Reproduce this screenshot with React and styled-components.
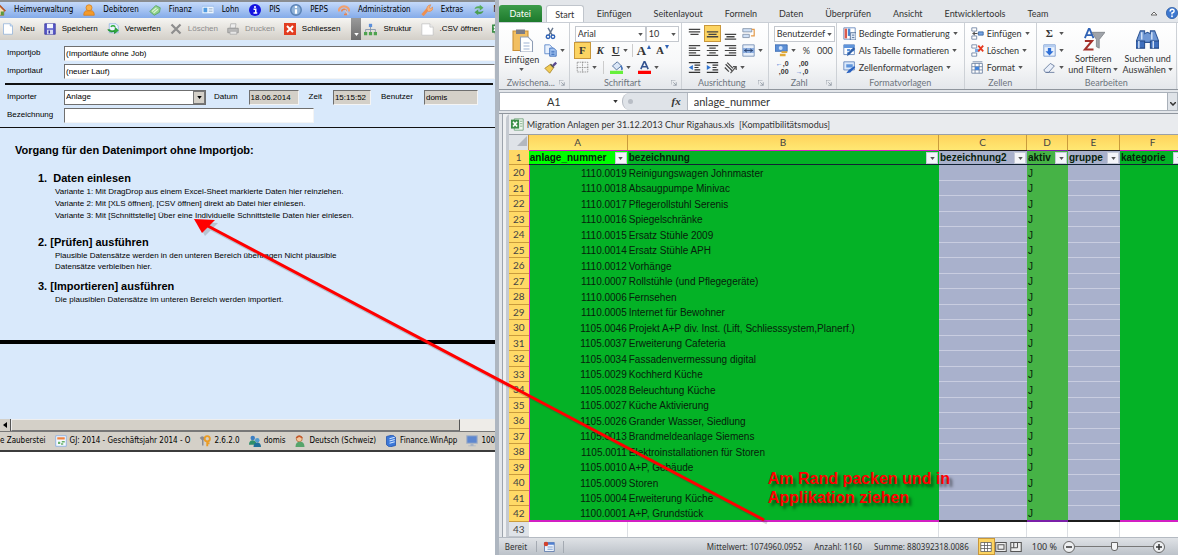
import React from "react";
import styled, {createGlobalStyle} from "styled-components";

const rows = [
  [20, "1110.0019", "Reinigungswagen Johnmaster"],
  [21, "1110.0018", "Absaugpumpe Minivac"],
  [22, "1110.0017", "Pflegerollstuhl Serenis"],
  [23, "1110.0016", "Spiegelschränke"],
  [24, "1110.0015", "Ersatz Stühle 2009"],
  [25, "1110.0014", "Ersatz Stühle APH"],
  [26, "1110.0012", "Vorhänge"],
  [27, "1110.0007", "Rollstühle (und Pflegegeräte)"],
  [28, "1110.0006", "Fernsehen"],
  [29, "1110.0005", "Internet für Bewohner"],
  [30, "1105.0046", "Projekt A+P div. Inst. (Lift, Schliesssystem,Planerf.)"],
  [31, "1105.0037", "Erweiterung Cafeteria"],
  [32, "1105.0034", "Fassadenvermessung digital"],
  [33, "1105.0029", "Kochherd Küche"],
  [34, "1105.0028", "Beleuchtung Küche"],
  [35, "1105.0027", "Küche Aktivierung"],
  [36, "1105.0026", "Grander Wasser, Siedlung"],
  [37, "1105.0013", "Brandmeldeanlage Siemens"],
  [38, "1105.0011", "Elektroinstallationen für Storen"],
  [39, "1105.0010", "A+P, Gebäude"],
  [40, "1105.0009", "Storen"],
  [41, "1105.0004", "Erweiterung Küche"],
  [42, "1100.0001", "A+P, Grundstück"],
];

const glyphs = {
  home: <><path d="M1 9L8 2l7 7-2 1v5H3v-5z" fill="#f3dfb8" stroke="#a0692c"/><path d="M0 9L8 1l8 8-2 1-6-6-6 6z" fill="#b5532a"/><path d="M9 10h4v5H9z" fill="#5a9a3c"/></>,
  person: <><path d="M1 15q0-6 4-6h6q4 0 4 6z" fill="#f39a2c" stroke="#d97a10"/><circle cx="8" cy="5" r="4" fill="#f8b04a" stroke="#d97a10"/></>,
  money: <><path d="M1 10L9 2l6 3-1 6-7 4z" fill="#8fd08a" stroke="#4fa05a"/><path d="M4 10l6-5M6 12l6-5" stroke="#d9f5d2" strokeWidth="1.5"/></>,
  card: <><path d="M0 3h16v10H0z" fill="#eef6ff" stroke="#8db4e6"/><path d="M2 5h5v6H2z" fill="#4f9be0"/><path d="M9 6h5M9 8h5M9 10h5" stroke="#9db4cc"/></>,
  info: <><circle cx="8" cy="8" r="8" fill="#1414e0"/><path d="M6 7h3v5h2M6 12h5" stroke="#fff" strokeWidth="2" fill="none"/><circle cx="8" cy="4" r="1.4" fill="#fff"/></>,
  info2: <><circle cx="8" cy="8" r="7" fill="#8fb2d8" stroke="#5b83b5" strokeWidth="2"/><path d="M8 7v6" stroke="#fff" strokeWidth="3"/><circle cx="8" cy="4" r="1.7" fill="#fff"/></>,
  admin: <><path d="M1 10a7 7 0 0 1 14 0" fill="none" stroke="#f0a070" strokeWidth="3"/><path d="M5 10a3 3 0 0 1 6 0v4H8" fill="none" stroke="#e88450" strokeWidth="2"/><path d="M9 8l5 6" stroke="#c9c9d6" strokeWidth="2"/></>,
  wrench: <><path d="M2 15l7-8" stroke="#ee8f50" strokeWidth="4"/><path d="M8 8q-1-6 5-7l-2 4 2 1 3-2q0 6-6 6z" fill="#f7b47e" stroke="#e08c52"/></>,
  refresh: <><path d="M2 7q1-5 7-4V1l5 4-5 4V6Q5 5 2 7z" fill="#56ad5a"/><path d="M14 9q-1 5-7 4v2l-5-4 5-4v3q4 1 7-1z" fill="#4a9e50"/></>,
  page: <><path d="M2 1h9l3 3v11H2z" fill="#fff" stroke="#8fb0da"/><path d="M11 1v3h3" fill="#dbe9fa" stroke="#8fb0da"/></>,
  greyPage: <><path d="M1 1h10l4 4v10H1z" fill="#fff" stroke="#c4c4c4"/><path d="M11 1v4h4" fill="#eee" stroke="#c4c4c4"/></>,
  save: <><path d="M1 1h14v14H1z" fill="#5a5ac8" stroke="#33339b"/><path d="M4 1h8v6H4z" fill="#f2f4ff"/><path d="M4 9h8v6H4z" fill="#d5d9f2"/><path d="M6 10h2v4H6z" fill="#33339b"/></>,
  undo: <><path d="M3 1h9l3 3v9H3z" fill="#eef5ff" stroke="#88aee0"/><path d="M1 9q4 5 9 2v3l5-4-4-4v3q-5 3-7 0z" fill="#2fae3c" stroke="#168a28"/><path d="M5 5q3-3 6 0" fill="none" stroke="#2fae3c" strokeWidth="2"/></>,
  cross: <path d="M2 2l12 12M14 2L2 14" stroke="#8e8e8e" strokeWidth="3"/>,
  print: <><path d="M5 1h7l-1 6H4z" fill="#ededed" stroke="#aaa"/><path d="M1 7h14v6H1z" fill="#b9b9b9" stroke="#8f8f8f"/><path d="M4 11h9v4H4z" fill="#e5e5e5" stroke="#aaa"/></>,
  close: <><path d="M0 0h16v16H0z" fill="#e23d20"/><path d="M4 4l8 8M12 4l-8 8" stroke="#fff" strokeWidth="2.6"/></>,
  tree: <><path d="M8 4v4M2 11V8h12v3M8 8v3" stroke="#7d8fa5" fill="none"/><path d="M6 1h4v4H6z" fill="#5b8fdb"/><path d="M0 11h4v4H0zM6 11h4v4H6zM12 11h4v4h-4z" fill="#4ea24e"/></>,
  excel: <><path d="M4 1h11v14H4z" fill="#eff7ef" stroke="#6d9f78"/><path d="M11 4h3M11 7h3M11 10h3" stroke="#72a67c"/><path d="M0 2h10v11H0z" fill="#3c8f49"/><path d="M2.500 4.500l5 6M7.500 4.500l-5 6" stroke="#fff" strokeWidth="2"/></>,
  calendar: <><path d="M1 1h14v14H1z" fill="#f5faff" stroke="#7ba7e0"/><path d="M3 3h10v3H3z" fill="#ee8340"/><path d="M4 9h3v3H4zM9 8h4v2H9zM8 11h3v2H8z" fill="#69b269"/></>,
  keys: <><path d="M1 4q3-5 7 0l-2 3v7H4V7z" fill="#8b8b93"/><circle cx="11" cy="5" r="3.500" fill="none" stroke="#eb9c25" strokeWidth="2.500"/><path d="M11 8v7M11 11h3" stroke="#eb9c25" strokeWidth="2.500"/></>,
  users: <><circle cx="5" cy="4" r="3" fill="#3d7fc2"/><path d="M0 13q0-6 5-6t5 6z" fill="#2f8f6a"/><circle cx="11" cy="7" r="3" fill="#4f9bd0"/><path d="M6 16q0-6 5-6t5 6z" fill="#1f6f99"/></>,
  globeUser: <><circle cx="7" cy="5" r="4" fill="#f3c79d" stroke="#b06a33"/><path d="M2 16q0-7 6-7t6 7z" fill="#56a46b"/><path d="M3 4q4-5 8 0" stroke="#c4582c" strokeWidth="2" fill="none"/></>,
  server: <><path d="M2 2l8-2 4 3v11l-8 2-4-3z" fill="#3c78d8" stroke="#1f4fa8"/><path d="M6 5l7-2M6 8l7-2M6 11l7-2" stroke="#cfe4ff" strokeWidth="1.500"/></>,
  monitor: <><path d="M1 1h14v10H1z" fill="#5e87cf" stroke="#a9b4c4" strokeWidth="1.500"/><path d="M6 11h4v3H6zM3 14h10v1H3z" fill="#a9b4c4"/></>,
  clipboard: <><path d="M2 2h10v13H2z" fill="#f2bf62" stroke="#c98f35" strokeWidth=".7"/><path d="M4 1h6v3H4z" fill="#7d7d86"/><path d="M7 6h5l3 3v7H7z" fill="#fff" stroke="#8e9db5" strokeWidth=".7"/><path d="M9 10h4M9 12h4M9 14h4" stroke="#9fb4d4" strokeWidth=".7"/></>,
  scissors: <><path d="M5 1l5 9M11 1L6 10" stroke="#64748c" strokeWidth="1.700"/><circle cx="5" cy="12" r="2.200" fill="none" stroke="#2f62b5" strokeWidth="1.700"/><circle cx="11" cy="12" r="2.200" fill="none" stroke="#2f62b5" strokeWidth="1.700"/></>,
  copy: <><path d="M1 1h6l3 3v8H1z" fill="#e7f0fd" stroke="#4f7fc6"/><path d="M7 5h5l3 3v7H7z" fill="#a6c6f2" stroke="#2f62b5"/><path d="M9 9h4M9 11h4M9 13h4" stroke="#2f62b5"/></>,
  brush: <><path d="M10 5l4-4 2 2-4 4z" fill="#5a4a90"/><path d="M1 9l7-5 4 4-5 7z" fill="#f2cc55" stroke="#a8842a"/><path d="M8 4l4 4" stroke="#555" strokeWidth="2"/></>,
  borders: <path d="M1.500 1.500h13v12h-13zM8 1v13M1 8h14" fill="none" stroke="#8c8c8c" strokeDasharray="2 1"/>,
  fill: <><path d="M3 6l6-5 5 5-6 5z" fill="#dbe7f7" stroke="#41638f"/><path d="M13 6q3 3 1 5" stroke="#3f6fb8" strokeWidth="2" fill="none"/><path d="M0 12h16v4H0z" fill="#66f03a"/></>,
  fontColor: <><path d="M3.500 10L8 0l4.500 10M5 7h6" fill="none" stroke="#33528f" strokeWidth="2"/><path d="M0 12h16v4H0z" fill="#f00"/></>,
  top: <path d="M1 3h14M1 6h14M3 9h10" stroke="#444" strokeWidth="1.600"/>,
  middle: <path d="M1 6h14M3 9h10M1 12h14" stroke="#444" strokeWidth="1.600"/>,
  bottom: <path d="M1 9h14M3 12h10M1 15h14" stroke="#444" strokeWidth="1.600"/>,
  left: <path d="M1 2h14M1 5h9M1 8h14M1 11h9M1 14h14" stroke="#444" strokeWidth="1.500"/>,
  center: <path d="M1 2h14M4 5h8M1 8h14M4 11h8M1 14h14" stroke="#444" strokeWidth="1.500"/>,
  right: <path d="M1 2h14M6 5h9M1 8h14M6 11h9M1 14h14" stroke="#444" strokeWidth="1.500"/>,
  wrap: <><path d="M1 2h11v4H1zM1 9h8v4H1z" fill="#cfe0f6" stroke="#7f8fa5"/><path d="M12 3h3v8h-4" stroke="#e39a4a" fill="none" strokeWidth="1.500"/></>,
  merge: <><path d="M1 1h14v14H1z" fill="#e7effa" stroke="#6d88b0"/><path d="M1 5h14v6H1z" fill="#86a9dd"/><path d="M3 8h10M6 6L3 8l3 2M10 6l3 2-3 2" stroke="#243b66" fill="none"/></>,
  outdent: <><path d="M1 2h14M8 5h7M8 8h5M8 11h7M1 14h14" stroke="#333" strokeWidth="1.500"/><path d="M6 5L1 8l5 3z" fill="#2f74d0"/></>,
  indent: <><path d="M1 2h14M8 5h7M8 8h5M8 11h7M1 14h14" stroke="#333" strokeWidth="1.500"/><path d="M1 5l5 3-5 3z" fill="#2f74d0"/></>,
  rotate: <><path d="M2 4l8 8M4 2l7 7M1 8l5 5" stroke="#444" strokeWidth="1.500"/><path d="M8 15l7-8M15 11V7h-4" stroke="#555" fill="none" strokeWidth="1.500"/></>,
  currency: <><path d="M0 1h15v8H0z" fill="#5c8fd6" stroke="#3767ad"/><circle cx="7" cy="5" r="2.400" fill="#cfe2fa"/><path d="M8 9h7v2H8zM6 12h7v3H6z" fill="#e2aa38"/></>,
  conditional: <><path d="M1 1h14v14H1z" fill="#fff" stroke="#5a7fb8"/><path d="M2 2h3v12H2z" fill="#db5b4e"/><path d="M6 2h3v9H6z" fill="#4a86d4"/><path d="M9 7h7v9H9z" fill="#dfe9f7" stroke="#44638f"/><path d="M11 10h3M11 13h3" stroke="#44638f"/></>,
  tableFmt: <><path d="M1 1h13v12H1z" fill="#fff" stroke="#5a7fb8"/><path d="M1 1h13v4H1zM5 6h4v3H5zM10 6h4v3h-4zM5 10h4v3H5z" fill="#5f95dc"/><path d="M15 6l-7 7-3 2 1-4 7-7z" fill="#2f5fa8"/></>,
  cellFmt: <><path d="M1 1h13v10H1z" fill="#dceafb" stroke="#5a7fb8"/><path d="M4 4h8v4H4z" fill="#5f95dc"/><path d="M15 8l-6 6-5 1 3-4 7-5z" fill="#2a62c0"/></>,
  insert: <><path d="M1 1h6v4H1zM1 11h6v4H1z" fill="#fff" stroke="#667d9e"/><path d="M9 6h6v4H9z" fill="#77a5e2" stroke="#33609e"/><path d="M8 8H3M5 6L2 8l3 2" stroke="#222" fill="none"/></>,
  remove: <><path d="M1 1h6v4H1zM1 11h6v4H1z" fill="#fff" stroke="#667d9e"/><path d="M5 6h5v4H5z" fill="#77a5e2"/><path d="M9 2l6 7M15 2L9 9" stroke="#e6391f" strokeWidth="2.200"/></>,
  format: <><path d="M1 3h13v12H1z" fill="#fff" stroke="#667d9e"/><path d="M1 7h13M1 11h13M5 3v12M10 3v12M2 1h12" stroke="#667d9e"/><path d="M5 7h5v4H5z" fill="#3f82dc"/></>,
  fillDown: <><path d="M1 1h14v14H1z" fill="#eaf2fd" stroke="#6c90c8"/><path d="M1 1h14v3H1z" fill="#b5cdf0"/><path d="M6 5h4v4h3l-5 5-5-5h3z" fill="#2f6fd6"/></>,
  eraser: <><path d="M1 11L9 3l5 3-7 8H3z" fill="#e9effa" stroke="#5b7196"/><path d="M4 14h10" stroke="#5b7196"/></>,
  funnel: <><path d="M2 7L5 0l3 7M3 5h4" stroke="#2f62b5" fill="none" strokeWidth="1.300"/><path d="M2 9h5l-5 6h6" stroke="#a3302b" fill="none" strokeWidth="1.400"/><path d="M7 3h9l-4 5v6l-2-1V8z" fill="#a0a4aa" stroke="#74787e" strokeWidth=".5"/></>,
  binoculars: <><path d="M3 2h3v2l2-1 2 1V2h3l2 5 1 3H0l1-3z" fill="#6f97d4" stroke="#2c5494" strokeWidth=".7"/><path d="M0 9h6v5H0zM10 9h6v5h-6z" fill="#3f6fbd" stroke="#264a86" strokeWidth=".7"/><path d="M2 9v5M12 9v5M4 3v5M11 3v5" stroke="#d5e4f8"/></>,
  help: <><circle cx="8" cy="8" r="7.500" fill="#3d78d0" stroke="#2858a0"/><path d="M5.500 6q0-3 2.700-3t2.600 2.500Q10.800 7 8 8v2" stroke="#fff" strokeWidth="1.900" fill="none"/><circle cx="8" cy="12.300" r="1.200" fill="#fff"/></>,
  macro: <><path d="M2 2h13v12H2z" fill="#eef4fd" stroke="#4f6fa6"/><path d="M2 2h13v3H2z" fill="#4f7fd0"/><path d="M6 8h7M6 11h7" stroke="#7f9fd0" strokeWidth="1.500"/><circle cx="4" cy="4" r="3" fill="#d4412c"/></>,
  grid: <path d="M1 2h14v12H1zM1 6h14M1 10h14M6 2v12M10 2v12" fill="#fff" stroke="#555"/>,
  layout: <path d="M1 2h14v12H1zM4 5h8v6H4z" fill="#eee" stroke="#555" strokeWidth="1.400"/>,
  breaks: <path d="M1 2h14v12H1zM5 2v7M10 2v7M1 9h9" fill="#eee" stroke="#555" strokeWidth="1.400"/>,
};

const Icon = ({name, size = 12}) => (
  <Svg viewBox="0 0 16 16" width={size} height={size} aria-hidden="true">{glyphs[name]}</Svg>
);

const Caret = ({color = "#555"}) => (
  <Svg viewBox="0 0 6 4" width="5" height="3" aria-hidden="true"><path d="M0 0h6L3 4z" fill={color}/></Svg>
);

const menu = [
  ["home", "Heimverwaltung"], ["person", "Debitoren"], ["money", "Finanz"], ["card", "Lohn"],
  ["info", "PIS"], ["info2", "PEPS"], ["admin", "Administration"], ["wrench", "Extras"], ["refresh", "N"],
];
const tools = [
  ["page", "Neu"], ["save", "Speichern"], ["undo", "Verwerfen"], ["cross", "Löschen", true],
  ["print", "Drucken", true], ["close", "Schliessen"],
];
const tabs = ["Einfügen", "Seitenlayout", "Formeln", "Daten", "Überprüfen", "Ansicht", "Entwicklertools", "Team"];

const ImportWindow = () => (
  <Finance>
    <MenuBar>
      {menu.map(([icon, text]) => <MenuItem key={text}><Icon name={icon}/>{text}</MenuItem>)}
    </MenuBar>
    <ToolBar>
      {tools.map(([icon, text, off]) => (
        <Tool key={text} disabled={off}><Icon name={icon}/>{text}</Tool>
      ))}
      <Grip><Caret color="#fff"/></Grip>
      <Tool><Icon name="tree" size={13}/>Struktur</Tool>
      <Tool><Icon name="greyPage" size={13}/>.CSV öffnen</Tool>
      <Tool aria-label=".XLS öffnen"><Icon name="excel"/></Tool>
    </ToolBar>
    <Form>
      <FormRow>
        <label htmlFor="job">Importjob</label>
        <Field id="job" $wide defaultValue="(Importläufe ohne Job)"/>
      </FormRow>
      <FormRow>
        <label htmlFor="lauf">Importlauf</label>
        <Field id="lauf" $wide defaultValue="(neuer Lauf)"/>
      </FormRow>
      <Rule/>
      <FormRow>
        <label htmlFor="importer">Importer</label>
        <Combo>
          <select id="importer"><option>Anlage</option></select>
          <ComboArrow><Caret color="#000"/></ComboArrow>
        </Combo>
        <Inline htmlFor="datum">Datum</Inline>
        <Field id="datum" $width={50} readOnly value="18.06.2014"/>
        <Inline htmlFor="zeit">Zeit</Inline>
        <Field id="zeit" $width={38} readOnly value="15:15:52"/>
        <Inline htmlFor="benutzer">Benutzer</Inline>
        <Field id="benutzer" $width={54} readOnly value="domis"/>
      </FormRow>
      <FormRow>
        <label htmlFor="bez">Bezeichnung</label>
        <Field id="bez" $width={250} defaultValue=""/>
      </FormRow>
    </Form>
    <Guide>
      <h1>Vorgang für den Datenimport ohne Importjob:</h1>
      <Step>
        <h2>1.&nbsp; Daten einlesen</h2>
        <p>Variante 1: Mit DragDrop aus einem Excel-Sheet markierte Daten hier reinziehen.</p>
        <p>Variante 2: Mit [XLS öffnen], [CSV öffnen] direkt ab Datei hier einlesen.</p>
        <p>Variante 3: Mit [Schnittstelle] Über eine Individuelle Schnittstelle Daten hier einlesen.</p>
      </Step>
      <Step $tight>
        <h2>2. [Prüfen] ausführen</h2>
        <p>Plausible Datensätze werden in den unteren Bereich übertragen Nicht plausible</p>
        <p>Datensätze verbleiben hier.</p>
      </Step>
      <Step>
        <h2>3. [Importieren] ausführen</h2>
        <p>Die plausiblen Datensätze im unteren Bereich werden importiert.</p>
      </Step>
    </Guide>
    <ResultArea/>
    <ScrollBar>
      <ScrollButton aria-label="Nach links"><Svg viewBox="0 0 4 6" width="4" height="6"><path d="M4 0v6L0 3z"/></Svg></ScrollButton>
      <ScrollThumb/>
    </ScrollBar>
    <FinanceStatus>
      <StatusItem>e Zauberstei</StatusItem>
      <StatusItem><Icon name="calendar"/>GJ: 2014 - Geschäftsjahr 2014 - O</StatusItem>
      <StatusItem><Icon name="keys"/>2.6.2.0</StatusItem>
      <StatusItem><Icon name="users"/>domis</StatusItem>
      <StatusItem><Icon name="globeUser"/>Deutsch (Schweiz)</StatusItem>
      <StatusItem><Icon name="server"/>Finance.WinApp</StatusItem>
      <StatusItem><Icon name="monitor"/>100</StatusItem>
    </FinanceStatus>
  </Finance>
);

const Launcher = () => (
  <Svg viewBox="0 0 8 8" width="6" height="6"><path d="M0 6V0h6M3 3l4 4M7 3v4H3" fill="none" stroke="#8a929c"/></Svg>
);

const Group = ({title, width, launcher, children}) => (
  <GroupBox $width={width}>
    <GroupBody>{children}</GroupBody>
    <GroupTitle><span>{title}</span>{launcher && <Launcher/>}</GroupTitle>
  </GroupBox>
);

const Split = ({icon, children, label, caret = true, ...rest}) => (
  <RibbonButton aria-label={label} {...rest}>
    {icon && <Icon name={icon} size={13}/>}{children}{caret && <Caret/>}
  </RibbonButton>
);

const Ribbon = () => (
  <RibbonBox>
    <Group title="Zwischena..." width={71} launcher>
      <BigButton $width={36}><Icon name="clipboard" size={24}/><span>Einfügen</span><Caret/></BigButton>
      <Lines $gap={3}>
        <Line><Split icon="scissors" label="Ausschneiden" caret={false}/></Line>
        <Line><Split icon="copy" label="Kopieren"/></Line>
        <Line><Split icon="brush" label="Format übertragen" caret={false}/></Line>
      </Lines>
    </Group>
    <Group title="Schriftart" width={112} launcher>
      <Lines>
        <Line $tight>
          <Picker $width={71}><select aria-label="Schriftart"><option>Arial</option></select><Caret/></Picker>
          <Picker $width={33}><select aria-label="Schriftgrad"><option>10</option></select><Caret/></Picker>
        </Line>
        <Line $narrow>
          <Letter $on><b>F</b></Letter>
          <Letter><i>K</i></Letter>
          <Letter><u>U</u><Caret/></Letter>
          <Divider/>
          <Letter $big>A<Svg viewBox="0 0 4 4" width="4" height="4"><path d="M0 4h4L2 0z" fill="#2f62b5"/></Svg></Letter>
          <Letter>A<Svg viewBox="0 0 4 4" width="4" height="4"><path d="M0 0h4L2 4z" fill="#2f62b5"/></Svg></Letter>
        </Line>
        <Line>
          <Split icon="borders" label="Rahmen"/>
          <Divider/>
          <Split icon="fill" label="Füllfarbe"/>
          <Split icon="fontColor" label="Textfarbe"/>
        </Line>
      </Lines>
    </Group>
    <Group title="Ausrichtung" width={87} launcher>
      <Lines>
        <Line $narrow>
          <Split icon="top" label="Oben" caret={false}/>
          <Split icon="middle" label="Mitte" caret={false} $on/>
          <Split icon="bottom" label="Unten" caret={false}/>
          <Split icon="wrap" label="Zeilenumbruch" caret={false}/>
        </Line>
        <Line $narrow>
          <Split icon="left" label="Links" caret={false}/>
          <Split icon="center" label="Zentriert" caret={false}/>
          <Split icon="right" label="Rechts" caret={false}/>
          <Split icon="merge" label="Verbinden"/>
        </Line>
        <Line $narrow>
          <Split icon="outdent" label="Einzug verkleinern" caret={false}/>
          <Split icon="indent" label="Einzug vergrössern" caret={false}/>
          <Split icon="rotate" label="Orientierung"/>
        </Line>
      </Lines>
    </Group>
    <Group title="Zahl" width={68} launcher>
      <Lines>
        <Line $tight>
          <Picker $width={61}><select aria-label="Zahlenformat"><option>Benutzerdef</option></select><Caret/></Picker>
        </Line>
        <Line><Split icon="currency" label="Währung"/><Split caret={false}>%</Split><Split caret={false}>000</Split></Line>
        <Line>
          <Decimal aria-label="Dezimalstelle hinzufügen"><span><em>←</em>,0</span><span>,00</span></Decimal>
          <Decimal aria-label="Dezimalstelle löschen"><span>,00</span><span><em>→</em>,0</span></Decimal>
        </Line>
      </Lines>
    </Group>
    <Group title="Formatvorlagen" width={128}>
      <Lines>
        <Line><Split icon="conditional">Bedingte Formatierung</Split></Line>
        <Line><Split icon="tableFmt">Als Tabelle formatieren</Split></Line>
        <Line><Split icon="cellFmt">Zellenformatvorlagen</Split></Line>
      </Lines>
    </Group>
    <Group title="Zellen" width={72}>
      <Lines>
        <Line><Split icon="insert">Einfügen</Split></Line>
        <Line><Split icon="remove">Löschen</Split></Line>
        <Line><Split icon="format">Format</Split></Line>
      </Lines>
    </Group>
    <Group title="Bearbeiten" width={140}>
      <Lines>
        <Line><Split label="Summe"><Sigma>Σ</Sigma></Split></Line>
        <Line><Split icon="fillDown" label="Füllbereich"/></Line>
        <Line><Split icon="eraser" label="Löschen"/></Line>
      </Lines>
      <BigButton $width={55}><Icon name="funnel" size={23}/><span>Sortieren</span><span>und Filtern <Caret/></span></BigButton>
      <BigButton $width={54}><Icon name="binoculars" size={23}/><span>Suchen und</span><span>Auswählen <Caret/></span></BigButton>
    </Group>
  </RibbonBox>
);

const Filter = () => <FilterButton aria-label="Filter"><Caret/></FilterButton>;

const Sheet = () => (
  <SheetTable>
    <colgroup>
      <Col $width={20}/><Col $width={99}/><col/><Col $width={88}/><Col $width={41}/><Col $width={52}/><Col $width={66}/>
    </colgroup>
    <thead>
      <tr>
        <ColHead><Svg viewBox="0 0 10 10" width="10" height="10"><path d="M10 0v10H0z" fill="#b3b8c0"/></Svg></ColHead>
        {["A", "B", "C", "D", "E", "F"].map(c => <ColHead key={c} $on>{c}</ColHead>)}
      </tr>
      <tr>
        <RowHead $on>1</RowHead>
        <NameCell $tone="lime">anlage_nummer<Filter/></NameCell>
        <NameCell $tone="green">bezeichnung<Filter/></NameCell>
        <NameCell $tone="blue">bezeichnung2<Filter/></NameCell>
        <NameCell $tone="pale">aktiv<Filter/></NameCell>
        <NameCell $tone="blue">gruppe<Filter/></NameCell>
        <NameCell $tone="green">kategorie<Filter/></NameCell>
      </tr>
    </thead>
    <Body>
      {rows.map(([n, nr, name]) => (
        <tr key={n}>
          <RowHead $on>{n}</RowHead>
          <Cell $tone="green" $first>{nr}</Cell>
          <Cell $tone="green">{name}</Cell>
          <Cell $tone="blue"/>
          <Cell $tone="pale">J</Cell>
          <Cell $tone="blue"/>
          <Cell $tone="green"/>
        </tr>
      ))}
    </Body>
    <tfoot>
      <tr>
        <RowHead>43</RowHead>
        <EmptyCell/><EmptyCell/><EmptyCell/><EmptyCell/><EmptyCell/><EmptyCell/>
      </tr>
    </tfoot>
  </SheetTable>
);

const ExcelWindow = () => (
  <Excel>
    <Tabs>
      <Tab $kind="file">Datei</Tab>
      <Tab $kind="active">Start</Tab>
      {tabs.map(t => <Tab key={t}>{t}</Tab>)}
      <TabTools>
        <Svg viewBox="0 0 8 5" width="8" height="5"><path d="M1 4l3-3 3 3z" fill="#fff" stroke="#666"/></Svg>
        <Icon name="help"/>
      </TabTools>
    </Tabs>
    <Ribbon/>
    <FormulaBar>
      <NameBox>A1<Caret color="#333"/></NameBox>
      <FxArea><Knob/><i>fx</i></FxArea>
      <Formula aria-label="Bearbeitungsleiste" defaultValue="anlage_nummer"/>
      <Expand aria-label="Erweitern"><Svg viewBox="0 0 6 4" width="6" height="4"><path d="M0 0l3 3 3-3" fill="none" stroke="#333" strokeWidth="1.500"/></Svg></Expand>
    </FormulaBar>
    <Workspace>
      <Workbook>
        <BookTitle><Icon name="excel" size={13}/>Migration Anlagen per 31.12.2013 Chur Rigahaus.xls&nbsp; [Kompatibilitätsmodus]</BookTitle>
        <Sheet/>
        <Note>Am Rand packen und in<br/>Applikation ziehen</Note>
      </Workbook>
    </Workspace>
    <ExcelStatus>
      <Ready>Bereit</Ready>
      <Macro><Icon name="macro"/></Macro>
      <Sums>
        <span>Mittelwert: 1074960.0952</span>
        <span>Anzahl: 1160</span>
        <span>Summe: 880392318.0086</span>
      </Sums>
      <ViewButton $on aria-label="Normal"><Icon name="grid"/></ViewButton>
      <ViewButton aria-label="Seitenlayout"><Icon name="layout"/></ViewButton>
      <ViewButton aria-label="Umbruchvorschau"><Icon name="breaks"/></ViewButton>
      <Percent>100 %</Percent>
      <Round aria-label="Verkleinern"><Svg viewBox="0 0 6 6" width="6" height="6"><path d="M0 3h6" stroke="#333" strokeWidth="1.500"/></Svg></Round>
      <Zoom type="range" aria-label="Zoom" min="0" max="100" defaultValue="50"/>
      <Round aria-label="Vergrössern"><Svg viewBox="0 0 6 6" width="6" height="6"><path d="M0 3h6M3 0v6" stroke="#333" strokeWidth="1.500"/></Svg></Round>
    </ExcelStatus>
  </Excel>
);

const App = () => (
  <Desktop>
    <GlobalStyle/>
    <ImportWindow/>
    <ExcelWindow/>
    <Arrow width="600" height="330" viewBox="0 0 600 330" aria-hidden="true">
      <g opacity=".2" transform="translate(3 3)">
        <path d="M16 15L574 310" stroke="#333" strokeWidth="3"/>
        <path d="M4 9l21 1-13 13z" fill="#333"/>
      </g>
      <path d="M16 15L574 310" stroke="#f00" strokeWidth="3"/>
      <path d="M4 9l21 1-13 13z" fill="#f00"/>
    </Arrow>
  </Desktop>
);

const GlobalStyle = createGlobalStyle`
  * { box-sizing: border-box; }
  body { margin: 0; background: #fff; overflow: hidden; }
  button, input, select { font: inherit; color: inherit; margin: 0; border-radius: 0; }
  button { border: 0; padding: 0; background: none; white-space: nowrap; }
  select { appearance: none; outline: 0; }
  h1, h2, p { margin: 0; }
`;
const Svg = styled.svg`
  flex: none;
`;
const Desktop = styled.main`
  position: relative;
  display: flex;
  align-items: flex-start;
`;
const Arrow = styled.svg`
  position: absolute;
  left: 190px;
  top: 210px;
  pointer-events: none;
`;

const Finance = styled.section`
  flex: 0 0 42%;
  min-width: 0;
  overflow: hidden;
  background: #d9e9fb;
  border-top: 2px solid #8a8d91;
  border-bottom: 2px solid #3c3c3c;
  font: 8px/12px "Liberation Sans", sans-serif;
  color: #000;
  white-space: nowrap;
`;
const MenuBar = styled.nav`
  display: flex;
  gap: 10px;
  height: 16px;
  margin-left: -6px;
  background: linear-gradient(#c5dafa, #84abe9);
  font-family: "DejaVu Sans Condensed", "DejaVu Sans", sans-serif;
`;
const MenuItem = styled.button`
  display: flex;
  flex: none;
  align-items: center;
  gap: 8px;
`;
const ToolBar = styled.div`
  display: flex;
  align-items: center;
  gap: 9px;
  height: 22px;
  padding-left: 2px;
  background: linear-gradient(#f6f5f2, #d3cfc8);
`;
const Tool = styled.button`
  display: flex;
  flex: none;
  align-items: center;
  gap: 6px;
  color: ${p => p.disabled ? "#8c8c8c" : "#000"};
`;
const Grip = styled.span`
  display: flex;
  flex: none;
  align-items: flex-end;
  justify-content: center;
  width: 10px;
  height: 22px;
  margin: 0 -6px 0 2px;
  padding-bottom: 4px;
  background: linear-gradient(#9a9a9a, #6d6d6d);
`;
const Form = styled.div`
  display: flex;
  flex-direction: column;
  gap: 2px;
  padding: 5px 0 4px 7px;
  border-bottom: 1px solid #111;
`;
const FormRow = styled.div`
  display: flex;
  align-items: center;
  height: 16px;

  & > label:first-child {
    flex: 0 0 57px;
  }
`;
const Inline = styled.label`
  padding: 0 7px 0 8px;
  flex: none;
  min-width: 28px;
`;
const Field = styled.input`
  flex: ${p => p.$wide ? "1" : `0 0 ${p.$width}px`};
  min-width: 0;
  width: ${p => p.$width}px;
  height: 15px;
  padding: 0 1px;
  border: 1px solid;
  border-color: #6f6f6f #f4f4f4 #f4f4f4 #6f6f6f;
  background: ${p => p.readOnly ? "#d4d0c8" : "#fff"};

  ${Inline} + & {
    margin: 0 2px 0 4px;
  }
`;
const Rule = styled.hr`
  width: 100%;
  height: 2px;
  margin: 2px 0 2px -2px;
  border: 0;
  background: #111;
`;
const Combo = styled.div`
  position: relative;
  width: 142px;
  height: 15px;

  select {
    width: 100%;
    height: 15px;
    padding: 0 1px;
    border: 1px solid #6f6f6f;
    background: #fff;
  }
`;
const ComboArrow = styled.span`
  position: absolute;
  top: 1px;
  right: 1px;
  display: flex;
  align-items: center;
  justify-content: center;
  width: 12px;
  height: 13px;
  border: 1px solid #777;
  background: #d4d0c8;
  pointer-events: none;
`;
const Guide = styled.article`
  height: 212px;
  padding: 16px 0 0 15px;

  h1 {
    font: bold 11px/13px "Liberation Sans", sans-serif;
    margin-bottom: 15px;
  }
`;
const Step = styled.section`
  padding-left: 23px;
  margin-bottom: ${p => p.$tight ? "8px" : "14px"};

  h2 {
    font: bold 11px/13px "Liberation Sans", sans-serif;
  }
  p {
    padding-left: 17px;
    line-height: ${p => p.$tight ? "11px" : "12px"};
  }
  h2 + p {
    margin-top: 1px;
  }
`;
const ResultArea = styled.div`
  height: 79px;
  border-top: 4px solid #000;
`;
const ScrollBar = styled.div`
  display: flex;
  height: 12px;
  padding-right: 35px;
  background: #eeece8;
`;
const ScrollButton = styled.button`
  display: flex;
  align-items: center;
  justify-content: center;
  width: 11px;
  background: #d4d0c8;
  border-right: 1px solid #555;
`;
const ScrollThumb = styled.div`
  flex: 1;
  background: #d4d0c8;
  border: 1px solid;
  border-color: #eee #555 #777 #eee;
`;
const FinanceStatus = styled.footer`
  display: flex;
  align-items: center;
  gap: 9px;
  height: 19px;
  background: #d4d0c8;
  border-top: 1px solid #777;
  font-family: "DejaVu Sans Condensed", "DejaVu Sans", sans-serif;
`;
const StatusItem = styled.span`
  display: flex;
  flex: none;
  align-items: center;
  gap: 3px;
`;

const Excel = styled.section`
  flex: 1;
  min-width: 0;
  overflow: hidden;
  border-left: 4px solid #aeb6c0;
  border-bottom: 2px solid #c3c8cf;
  background: #e3e6ea;
  font: 9px/11px Lato, "Noto Sans", sans-serif;
  color: #333;
  white-space: nowrap;
`;
const Tabs = styled.nav`
  display: flex;
  align-items: flex-end;
  height: 22px;
  background: #e3e6ea;
`;
const tabKinds = {
  file: "width: 43px; margin-right: 4px; color: #fff; background: linear-gradient(#3d9c4a, #1d7a2c); border-radius: 3px 3px 0 0;",
  active: "width: 38px; margin-right: 2px; background: #fff; border: 1px solid #c0c5cc; border-bottom: 0; border-radius: 3px 3px 0 0;",
};
const Tab = styled.button`
  flex: none;
  height: 17px;
  padding: 0 11px;
  ${p => p.$kind && "padding: 0;"}
  ${p => tabKinds[p.$kind]}
`;
const TabTools = styled.div`
  display: flex;
  align-items: center;
  gap: 8px;
  height: 18px;
  margin-left: auto;
`;
const RibbonBox = styled.div`
  display: flex;
  height: 68px;
  background: linear-gradient(#fff, #f7f8f9 60%, #e4e7eb);
  border-top: 1px solid #c9ced5;
  border-bottom: 1px solid #8f959d;
`;
const GroupBox = styled.div`
  display: flex;
  flex-direction: column;
  flex: 0 0 ${p => p.$width}px;
  padding-top: 2px;
  border-right: 1px solid #cdd1d6;
  overflow: hidden;
`;
const GroupBody = styled.div`
  display: flex;
  flex: 1;
  padding-left: 5px;
`;
const GroupTitle = styled.div`
  display: flex;
  align-items: center;
  height: 13px;
  padding: 0 4px;
  color: #6d747d;

  span {
    flex: 1;
    text-align: center;
  }
`;
const Lines = styled.div`
  display: flex;
  flex-direction: column;
  min-width: 24px;
  margin-left: ${p => p.$gap || 0}px;
`;
const Line = styled.div`
  display: flex;
  align-items: center;
  gap: ${p => p.$tight ? "0" : p.$narrow ? "3px" : "5px"};
  height: 17px;
`;
const RibbonButton = styled.button`
  display: flex;
  align-items: center;
  gap: 3px;
  height: 15px;
  padding: 0 1px;
  background: ${p => p.$on ? "#fcd462" : "none"};
  outline: ${p => p.$on ? "1px solid #c9973a" : "none"};
`;
const Letter = styled(RibbonButton)`
  min-width: 15px;
  justify-content: center;
  font: bold ${p => p.$big ? "13px" : "11px"}/13px "Liberation Serif", serif;

  svg[width="4"] {
    align-self: flex-start;
    margin: 2px 0 0 -2px;
  }
`;
const Sigma = styled.b`
  width: 13px;
  font: bold 11px/13px "Liberation Serif", serif;
`;
const Divider = styled.span`
  width: 1px;
  height: 13px;
  background: #ccc;
`;
const Decimal = styled.button`
  display: flex;
  flex-direction: column;
  align-items: flex-end;
  font: bold 7px/8px "Liberation Sans", sans-serif;
  padding-left: 2px;

  em {
    font-style: normal;
    color: #2f6fd6;
  }
`;
const BigButton = styled.button`
  display: flex;
  flex: 0 0 ${p => p.$width}px;
  flex-direction: column;
  align-items: center;
  padding-top: 3px;
  line-height: 11px;

  & > span {
    display: flex;
    align-items: center;
    gap: 2px;
  }
  svg + span {
    margin-top: 2px;
  }
  span + svg {
    margin-top: 3px;
  }
`;
const Picker = styled.span`
  position: relative;
  width: ${p => p.$width}px;

  select {
    width: 100%;
    height: 16px;
    padding: 0 2px;
    border: 1px solid #c4c8ce;
    background: #fff;
  }
  svg {
    position: absolute;
    right: 3px;
    top: 7px;
    pointer-events: none;
  }
`;
const FormulaBar = styled.div`
  display: flex;
  height: 19px;
  margin-top: 2px;
  background: #fff;
  border: 1px solid #a9b0b9;
  font-size: 11px;
`;
const NameBox = styled.div`
  display: flex;
  align-items: center;
  justify-content: flex-end;
  gap: 52px;
  width: 122px;
  padding-right: 4px;
`;
const FxArea = styled.div`
  display: flex;
  align-items: center;
  justify-content: space-between;
  width: 66px;
  padding: 0 6px 0 5px;
  border-left: 1px solid #b5bac2;
  border-right: 1px solid #b5bac2;
  border-radius: 8px 0 0 8px;
  background: #dfe3e8;
  font-family: "Liberation Serif", serif;
  font-weight: bold;
`;
const Knob = styled.span`
  width: 5px;
  height: 5px;
  border-radius: 50%;
  background: #b9bec6;
`;
const Formula = styled.input`
  flex: 1;
  min-width: 0;
  padding: 0 6px;
  border: 0;
`;
const Expand = styled.button`
  width: 10px;
  border-left: 1px solid #a9b0b9;
  background: #dfe3e8;
`;
const Workspace = styled.div`
  margin-top: 2px;
  padding-left: 7px;
  overflow: hidden;
  border-top: 1px solid #8f959d;
  background: linear-gradient(90deg, #e3e6ea 3px, #9da4ad 3px, #9da4ad 4px, #eef0f2 4px);
`;
const Workbook = styled.div`
  position: relative;
  margin-right: -8px;
  border-left: 3px solid #c5cad1;
  border-radius: 5px 0 0 0;
`;
const BookTitle = styled.div`
  display: flex;
  align-items: center;
  gap: 3px;
  height: 21px;
  padding-left: 2px;
  border-bottom: 1px solid #9aa0a8;
  background: #e9ebee;
`;
const Note = styled.div`
  position: absolute;
  left: 259px;
  top: 355px;
  font: bold 16px/19px "Liberation Sans", sans-serif;
  color: #f00;
  text-shadow: 3px 3px 3px rgba(0, 0, 0, 0.5);
`;

const tones = {lime: "#00ff00", green: "#04b226", blue: "#a9b1cc", pale: "#46b346"};
const marks = {lime: "#d31ec4", green: "#d31ec4", blue: "#1c1c1c", pale: "#7a1fa8"};

const SheetTable = styled.table`
  width: 100%;
  table-layout: fixed;
  border-collapse: separate;
  border-spacing: 0;
  font: 10px/13px "Liberation Sans", sans-serif;
  color: #07210b;

  th, td {
    padding: 0 1px;
    height: 15px;
    overflow: hidden;
  }
`;
const Col = styled.col`
  width: ${p => p.$width}px;
`;
const Body = styled.tbody`
  tr:nth-child(odd) > * {
    height: 16px;
  }
  tr:last-child td {
    border-bottom-width: 2px;
    border-bottom-style: solid;
  }
`;
const ColHead = styled.th`
  font: 10px/13px Lato, "Noto Sans", sans-serif;
  color: #444;
  text-align: ${p => p.$on ? "center" : "right"};
  background: ${p => p.$on ? "linear-gradient(#ffd35c, #ffe873)" : "#dfe3e8"};
  border-right: 1px solid #c99b3c;
`;
const RowHead = styled.th`
  font: 10px/13px Lato, "Noto Sans", sans-serif;
  color: #444;
  background: ${p => p.$on ? "#ffd966" : "#dfe3e8"};
  border-bottom: 1px solid ${p => p.$on ? "#c99b3c" : "#c0c5cc"};
`;
const NameCell = styled.th`
  position: relative;
  text-align: left;
  background: ${p => tones[p.$tone]};
  border-top: 1px solid ${p => marks[p.$tone]};
  border-bottom: 1px solid #123;
`;
const FilterButton = styled.button`
  position: absolute;
  right: 1px;
  top: 1px;
  display: flex;
  align-items: center;
  justify-content: center;
  width: 12px;
  height: 12px;
  border: 1px solid #c5cad8;
  background: #f4f5f9;
`;
const Cell = styled.td`
  background: ${p => tones[p.$tone]};
  text-align: ${p => p.$first ? "right" : "left"};
  border-left: ${p => p.$first ? "1px solid #d31ec4" : "0"};
  border-bottom: ${p => p.$tone === "blue" ? "1px solid #c9cde0" : "0"};

  tr:last-child > && {
    border-bottom-color: ${p => marks[p.$tone]};
  }
`;
const EmptyCell = styled.td`
  background: #fff;
  border-right: 1px solid #dcdfe4;
`;

const ExcelStatus = styled.footer`
  display: flex;
  align-items: center;
  height: 18px;
  padding-right: 13px;
  border-top: 1px solid #b4bac2;
  background: linear-gradient(#dfe2e6, #bcc2c9);
  font: 8px/11px "Noto Sans", sans-serif;
`;
const Ready = styled.span`
  width: 38px;
  padding-left: 6px;
  border-right: 1px solid #a4aab2;
`;
const Macro = styled.span`
  display: flex;
  padding: 0 8px 0 6px;
  border-right: 1px solid #a4aab2;
`;
const Sums = styled.div`
  display: flex;
  flex: 1;
  justify-content: flex-end;
  gap: 12px;
  padding-right: 10px;
`;
const ViewButton = styled.button`
  display: flex;
  align-items: center;
  justify-content: center;
  width: 15px;
  height: 15px;
  background: ${p => p.$on ? "#fcd462" : "none"};
  outline: ${p => p.$on ? "1px solid #c9973a" : "none"};
`;
const Percent = styled.span`
  padding: 0 6px 0 8px;
  font-size: 9px;
`;
const Round = styled.button`
  display: flex;
  align-items: center;
  justify-content: center;
  width: 12px;
  height: 12px;
  border: 1px solid #666;
  && { border-radius: 50%; }
  background: #eef0f2;
`;
const Zoom = styled.input`
  appearance: none;
  width: 78px;
  height: 12px;
  background: linear-gradient(#777, #777) center / 100% 1px no-repeat;

  &::-webkit-slider-thumb {
    appearance: none;
    width: 7px;
    height: 9px;
    border: 1px solid #666;
    border-radius: 0 0 3px 3px;
    background: #f4f5f6;
  }
`;

export default App;
